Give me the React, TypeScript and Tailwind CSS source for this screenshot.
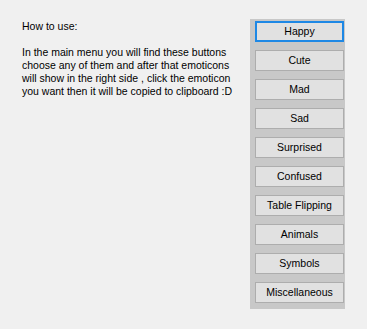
import React from "react";

const buttons = [
  "Happy",
  "Cute",
  "Mad",
  "Sad",
  "Surprised",
  "Confused",
  "Table Flipping",
  "Animals",
  "Symbols",
  "Miscellaneous",
];

export default function App() {
  return (
    <div
      className="w-[367px] h-[329px] bg-[#f0f0f0] flex text-black text-[10.5px] leading-[13px]"
      style={{ fontFamily: '"Liberation Sans", Arial, sans-serif' }}
    >
      <div className="w-[250px] pl-[22px] pt-[20px]">
        <p>How to use:</p>
        <p>&nbsp;</p>
        <p>In the main menu you will find these buttons</p>
        <p>choose any of them and after that emoticons</p>
        <p>will show in the right side , click the emoticon</p>
        <p>you want then it will be copied to clipboard :D</p>
      </div>
      <div className="mt-[19px] w-[95px] h-[290px] bg-[#c8c8c8] pl-[5px] pt-[2px] flex flex-col gap-[8px]">
        {buttons.map((b, i) => (
          <button
            key={b}
            className={
              i === 0
                ? "w-[89px] h-[21px] flex items-center justify-center border-2 border-[#1e88e5] bg-[#e1e1e1]"
                : "w-[89px] h-[21px] flex items-center justify-center border border-[#adadad] bg-[#e1e1e1]"
            }
          >
            {b}
          </button>
        ))}
      </div>
    </div>
  );
}
